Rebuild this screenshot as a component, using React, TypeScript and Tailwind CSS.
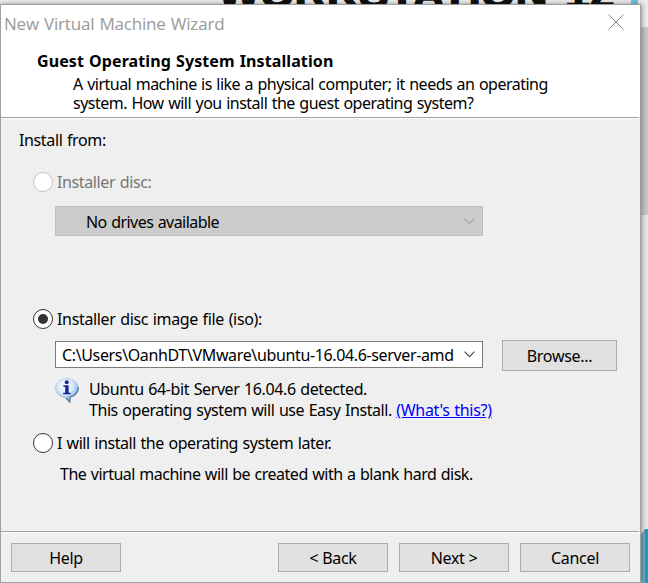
import type { ReactNode } from 'react';

function Radio({ checked, disabled }: { checked?: boolean; disabled?: boolean }) {
  return (
    <span
      className={`flex size-5 shrink-0 items-center justify-center rounded-full border bg-white ${
        disabled ? 'border-[#c4c4c4]' : 'border-[#333333]'
      }`}
    >
      {checked && <span className="size-[10px] rounded-full bg-[#333333]" />}
    </span>
  );
}

function Button({ children, className }: { children: ReactNode; className: string }) {
  return (
    <button
      type="button"
      className={`flex items-center justify-center border border-[#adadad] bg-[#e1e1e1] tracking-[-0.3px] ${className}`}
    >
      {children}
    </button>
  );
}

function Chevron({ className }: { className: string }) {
  return (
    <svg viewBox="0 0 11 7" className={`h-[7px] w-[11px] shrink-0 fill-none ${className}`}>
      <path d="M0.5 0.7 5.5 5.7 10.5 0.7" strokeWidth="1.1" />
    </svg>
  );
}

function InfoIcon() {
  return (
    <svg viewBox="0 0 24 25" className="h-[25px] w-6 shrink-0">
      <defs>
        <radialGradient id="bubble" cx="0.42" cy="0.3" r="0.7">
          <stop offset="0" stopColor="#ffffff" />
          <stop offset="0.5" stopColor="#d6e8fa" />
          <stop offset="1" stopColor="#6fa3d6" />
        </radialGradient>
      </defs>
      <path
        d="M12 .7C5.500 .7 .6 4.800 .6 10.200c0 4.600 3.400 8 8.400 9.200 2.600.700 3.700 2.600 5.800 4.800l.3-5c5-1.100 8.300-4.500 8.300-9C23.400 4.800 18.500 .7 12 .7Z"
        fill="url(#bubble)"
        stroke="#b7c9dc"
        strokeWidth="1"
      />
      <path d="M23.200 9c.3 5-3.200 9-8.200 10.200l-.3 4.800-3.500-4" fill="none" stroke="#557da5" strokeWidth="1.300" />
      <circle cx="11.700" cy="4.300" r="2" fill="#12269a" />
      <path d="M8.300 7.300h5.300v7.500h2v1.500H8.200v-1.500h2V8.800H8.300Z" fill="#12269a" />
    </svg>
  );
}

export default function App() {
  return (
    <div className="relative h-[583px] w-[648px] overflow-hidden bg-[#e8e8e8] font-['Noto_Sans',sans-serif] text-[16px] text-black [word-spacing:0.8px]">
      <div className="absolute top-0 right-0 h-[27px] w-full bg-[#ededed]" />
      <div className="absolute top-[27px] right-0 h-[188px] w-2 bg-[#c8c8c8]" />
      <div className="absolute -top-[32px] left-[218px] h-[50px] text-[44.5px] leading-[50px] font-bold whitespace-nowrap text-[#101212] [-webkit-text-stroke:1.5px_#101212] [word-spacing:5px] font-['Liberation_Sans',sans-serif]">
        WORKSTATION 12
      </div>
      <div className="absolute top-0 left-[631px] h-5 w-[7px] bg-[#72c4de]" />
      <svg viewBox="0 0 60 60" className="absolute top-[523px] left-[588px] size-[60px]">
        <path d="M52 13 57 6h3v54H0v-1h52Z" fill="#6bb0c8" />
        <path d="M57 6h3v54h-3Z" fill="#2797bd" />
      </svg>

      <div className="absolute top-1 left-0 flex h-[579px] w-[641px] flex-col border border-[#a0a0a0] bg-[#efefef] leading-5 shadow-[1px_0_5px_rgba(0,0,0,0.4)]">
        <header className="h-[112px] shrink-0 bg-white">
          <div className="flex h-[38px] items-center justify-between pr-4 pl-[3px] text-[#999999]">
            <h1 className="text-[17px] tracking-[-0.18px] whitespace-nowrap font-['Open_Sans',sans-serif]">New Virtual Machine Wizard</h1>
            <svg viewBox="0 0 16 16" className="mb-1 size-4 fill-none stroke-[#888888]">
              <path d="M.5 .5 15.500 15.500M15.500 .5 .5 15.500" strokeWidth="1" />
            </svg>
          </div>
          <h2 className="mt-2 ml-9 text-[16px] leading-5 font-bold tracking-[0.1px] whitespace-nowrap">Guest Operating System Installation</h2>
          <p className="mt-1 ml-[72px] leading-[19px] tracking-[-0.51px] whitespace-nowrap">
            A virtual machine is like a physical computer; it needs an operating
            <br />
            system. How will you install the guest operating system?
          </p>
        </header>

        <main className="mr-px flex h-[415px] shrink-0 flex-col border-y border-[#a0a0a0] shadow-[inset_0_1px_0_#ffffff]">
          <p className="mt-3 ml-[18px] tracking-[-0.37px]">Install from:</p>
          <label className="mt-[22px] ml-8 flex items-center gap-1 tracking-[-0.38px] text-[#777777]">
            <Radio disabled />
            Installer disc:
          </label>
          <div className="mt-[14px] ml-[54px] flex h-[30px] w-[428px] items-center justify-between border border-[#bfbfbf] bg-[#cccccc] pr-[7px] pl-[30px]">
            <span className="mt-px tracking-[-0.55px]">No drives available</span>
            <Chevron className="stroke-[#a0a0a0]" />
          </div>
          <label className="mt-[73px] ml-8 flex items-center gap-1 tracking-[-0.34px]">
            <Radio checked />
            Installer disc image file (iso):
          </label>
          <div className="mt-[11px] ml-[54px] flex">
            <div className="mt-px flex h-[27px] w-[428px] items-center justify-between border border-[#7a7a7a] bg-white pr-[7px] pl-[6px]">
              <span className="w-[393px] overflow-hidden tracking-[-0.36px] whitespace-nowrap">C:\Users\OanhDT\VMware\ubuntu-16.04.6-server-amd</span>
              <Chevron className="stroke-[#444444]" />
            </div>
            <Button className="ml-[19px] h-[31px] w-[115px] pt-px">Browse...</Button>
          </div>
          <div className="mt-[7px] ml-[54px] flex gap-[10px]">
            <InfoIcon />
            <div className="mt-px h-[42px] leading-[21px] whitespace-nowrap">
              <p className="tracking-[-0.39px]">Ubuntu 64-bit Server 16.04.6 detected.</p>
              <p className="tracking-[-0.45px]">
                This operating system will use Easy Install.{' '}
                <a className="tracking-[-0.3px] text-[#0000ff] underline">(What's this?)</a>
              </p>
            </div>
          </div>
          <label className="mt-3 ml-8 flex items-center gap-1 tracking-[-0.43px]">
            <Radio />I will install the operating system later.
          </label>
          <p className="mt-[11px] ml-[59px] tracking-[-0.5px]">The virtual machine will be created with a blank hard disk.</p>
        </main>

        <footer className="mr-px flex grow items-start border-t border-white pt-[10px] pl-[10px]">
          <Button className="h-[29px] w-[110px] pt-px">Help</Button>
          <Button className="ml-[157px] h-[29px] w-[110px] pt-px">&lt; Back</Button>
          <Button className="ml-[11px] h-[29px] w-[110px] pt-px">Next &gt;</Button>
          <Button className="ml-[11px] h-[29px] w-[110px] pt-px">Cancel</Button>
        </footer>
      </div>
    </div>
  );
}
